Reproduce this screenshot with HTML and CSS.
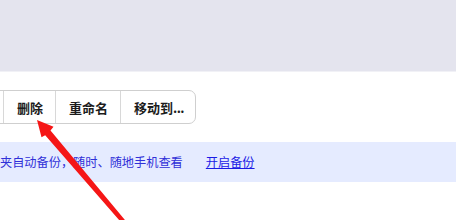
FILE: index.html
```html
<!DOCTYPE html>
<html lang="zh">
<head>
<meta charset="utf-8">
<link rel="stylesheet" href="styles.css">
</head>
<body>
<div class="topbar"></div>
<div class="toolbar">
  <div class="btn-group">
    <span class="btn btn-stub"></span>
    <span class="btn">删除</span>
    <span class="btn">重命名</span>
    <span class="btn btn-last">移动到<span class="dots">...</span></span>
  </div>
</div>
<div class="notice">
  <span class="notice-text">夹自动备份，随时、随地手机查看</span>
  <a class="notice-link" href="#">开启备份</a>
</div>
<svg class="arrow" width="456" height="220" viewBox="0 0 456 220">
  <polygon fill="#f51616" points="37,120 53.5,126.8 50.5,130.6 129.6,225.6 126.4,228.4 45.2,135.2 41.5,137.2"/>
</svg>
</body>
</html>
```
FILE: styles.css
```css
html, body {
  margin: 0;
  padding: 0;
  width: 456px;
  height: 220px;
  overflow: hidden;
  background: #ffffff;
  font-family: "Noto Sans CJK SC", "Noto Sans", sans-serif;
  position: relative;
}
.topbar {
  height: 71px;
  background: #e4e4ee;
  border-bottom: 1px solid #f1f1f6;
}
.toolbar {
  padding-top: 18px;
  height: 34px;
  display: flex;
}
.btn-group {
  display: flex;
  margin-left: -21px;
  border: 1px solid #cfcfcf;
  border-radius: 7px;
  height: 32px;
  background: #fff;
}
.btn {
  display: flex;
  align-items: center;
  padding: 0 12px 0 13px;
  font-size: 13px;
  font-weight: bold;
  color: #1c1c1c;
  border-left: 1px solid #d8d8d8;
  line-height: 1;
}
.btn-stub {
  width: 23px;
  padding: 0;
  border-left: none;
}
.btn-last {
  padding-right: 11px;
}
.dots {
  letter-spacing: -0.6px;
}
.notice {
  margin-top: 18px;
  height: 40px;
  background: #e5ebff;
  display: flex;
  align-items: center;
  font-size: 12.2px;
}
.notice-text {
  color: #3030d8;
}
.notice-link {
  margin-left: 23px;
  color: #1a1ae6;
  text-decoration: underline;
}
.arrow {
  position: absolute;
  left: 0;
  top: 0;
}
```
